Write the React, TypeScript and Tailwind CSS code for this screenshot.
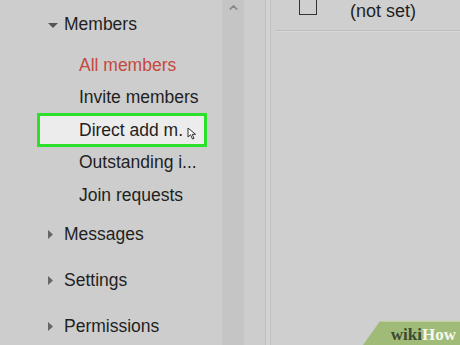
import { ChevronUp } from "lucide-react"

function DownTriangle() {
  return (
    <svg width="10" height="5" viewBox="0 0 10 5" className="mr-[8px]">
      <path d="M0 0 L10 0 L5 5 Z" fill="#555" />
    </svg>
  )
}

function RightTriangle() {
  return (
    <svg width="5" height="9" viewBox="0 0 5 9" className="ml-[2px] mr-[11px]">
      <path d="M0 0 L5 4.5 L0 9 Z" fill="#666" />
    </svg>
  )
}

function Cursor() {
  return (
    <svg width="11" height="13" viewBox="0 0 11 13" className="ml-[4px] mt-[6px]">
      <path d="M1 1 L1 10 L3.5 7.8 L5.5 12 L7 11.3 L5.2 7.3 L8.5 7.3 Z" fill="#fff" stroke="#333" strokeWidth="1" strokeLinejoin="round" />
    </svg>
  )
}

export default function App() {
  const subItems = ["All members", "Invite members", "Direct add m.", "Outstanding i...", "Join requests"]
  const mainItems = ["Messages", "Settings", "Permissions"]

  return (
    <div className="relative flex w-[460px] h-[345px] overflow-hidden bg-[#cdcdcd] text-[17.5px] text-[#1f1f1f] font-['Liberation_Sans',Arial,sans-serif]">
      {/* Sidebar */}
      <div className="w-[222px] shrink-0 pt-[9px]">
        <div className="flex items-center h-[32px] pl-[48px]">
          <DownTriangle />
          <span className="leading-none -ml-[2px]">Members</span>
        </div>
        <div className="mt-[8px]">
          {subItems.map((item, i) =>
            i === 2 ? (
              <div
                key={item}
                className="flex items-center h-[34px] -my-[0.75px] ml-[37px] w-[170px] pl-[39px] border-[3px] border-[#2be02b] bg-[#ececec]"
              >
                <span className="leading-none">{item}</span>
                <Cursor />
              </div>
            ) : (
              <div key={item} className="flex items-center h-[32.5px] pl-[79px]">
                <span className={`leading-none ${i === 0 ? "text-[#c5493f]" : ""}`}>{item}</span>
              </div>
            )
          )}
        </div>
        {mainItems.map((item) => (
          <div key={item} className="flex items-center h-[46px] pl-[46px]">
            <RightTriangle />
            <span className="leading-none">{item}</span>
          </div>
        ))}
      </div>

      {/* Scrollbar */}
      <div className="w-[22px] shrink-0 bg-[#c5c5c5] flex justify-center pt-[1px]">
        <ChevronUp className="w-[13px] h-[13px] text-[#8a8a8a]" strokeWidth={3} />
      </div>

      <div className="w-[21px] shrink-0" />
      <div className="w-[1px] shrink-0 bg-[#bdbdbd]" />
      <div className="w-[4px] shrink-0 bg-[#d3d3d3]" />
      <div className="w-[1px] shrink-0 bg-[#c2c2c2]" />

      {/* Content */}
      <div className="flex-1 bg-[#cfcfcf]">
        <div className="ml-[5px] h-[31px] flex items-start border-b border-[#bcbcbc]">
          <div className="ml-[23px] w-[18px] h-[15px] border-x-[1.5px] border-b-[1.5px] border-[#333]" />
          <span className="ml-[33px] mt-[2px] leading-none text-[18px]">(not set)</span>
        </div>
        <div className="ml-[5px] h-[1px] bg-[#d9d9d9]" />
      </div>

      {/* wikiHow badge */}
      <div className="absolute right-0 bottom-0 w-[97px] h-[24px] bg-[#a0bb78] border-t border-[#bdd19f] [clip-path:polygon(17px_0,100%_0,100%_100%,0_100%)] flex items-center justify-end pr-[4px] pt-[1px] font-['Liberation_Serif',serif] font-bold text-[17px] leading-none">
        <span className="text-[#3d4a33]">wiki</span>
        <span className="text-[#f4f8ee]">How</span>
      </div>
    </div>
  )
}
